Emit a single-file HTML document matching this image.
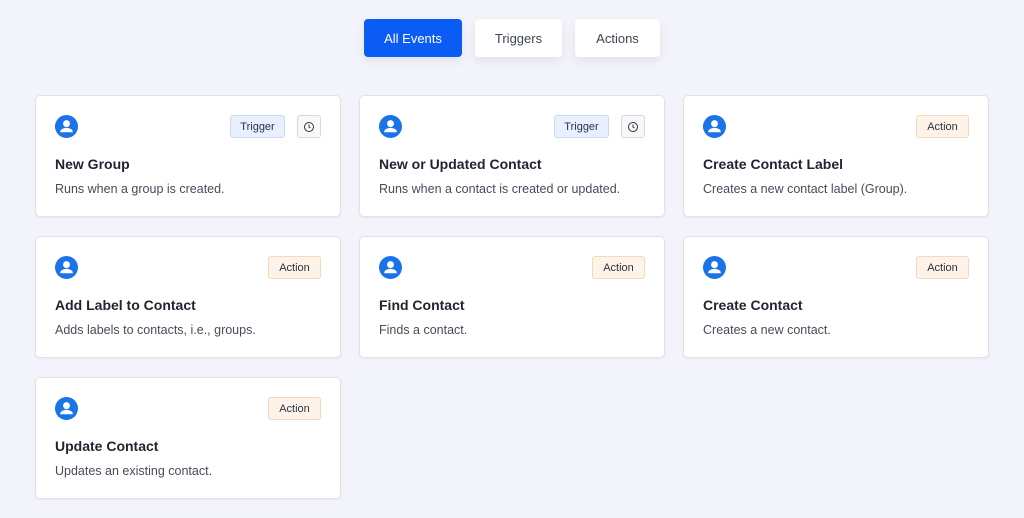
<!DOCTYPE html>
<html><head><style>
*{box-sizing:border-box;margin:0;padding:0}
body{width:1024px;height:518px;background:#f3f4fb;font-family:"Liberation Sans",sans-serif;position:relative;overflow:hidden}
.btn{position:absolute;top:19px;height:38px;border-radius:4px;background:#fff;color:#3d4452;font-size:13px;display:flex;align-items:center;justify-content:center;box-shadow:0 4px 10px rgba(0,0,0,.08)}
.btn.on{background:#0a5cf5;color:#fff}
.card{position:absolute;width:306px;height:122px;background:#fff;border:1px solid #dfe2e8;border-radius:5px;box-shadow:0 1px 3px rgba(0,0,0,.05)}
.ic{position:absolute;left:19px;top:19px;width:23px;height:23px}
.t{position:absolute;left:19px;top:60px;font-size:14px;font-weight:bold;color:#1f2430}
.d{position:absolute;left:19px;top:86px;font-size:12.5px;color:#454c5a}
.b{position:absolute;top:19px;height:23px;border-radius:3px;font-size:11px;display:flex;align-items:center;justify-content:center;color:#2c3340}
.tr{background:#e8f0fd;border:1px solid #c8d8f5;width:55px;right:55px}
.ac{background:#fdf3e8;border:1px solid #f3d9bc;width:53px;right:19px}
.ck{right:19px;width:24px;border:1px solid #d6d9df;background:#f7f8fa}
</style></head><body>
<div class="btn on" style="left:364px;width:98px">All Events</div>
<div class="btn" style="left:475px;width:87px">Triggers</div>
<div class="btn" style="left:575px;width:85px">Actions</div>
<svg width="0" height="0" style="position:absolute"><defs><symbol id="u" viewBox="0 0 24 24"><circle cx="12" cy="12" r="12" fill="#1a73e8"/><circle cx="12" cy="9" r="3.6" fill="#fff"/><path d="M5.5 17.2c0-2.6 4.3-3.8 6.5-3.8s6.5 1.2 6.5 3.8V18h-13z" fill="#fff"/></symbol><symbol id="c" viewBox="0 0 24 24"><circle cx="12" cy="12" r="9" fill="none" stroke="#333" stroke-width="2"/><path d="M12 7V12l3 2" fill="none" stroke="#333" stroke-width="2"/></symbol></defs></svg>

<div class="card" style="left:35px;top:95px"><svg class="ic"><use href="#u"/></svg><div class="b tr">Trigger</div><div class="b ck"><svg width="12" height="12"><use href="#c"/></svg></div><div class="t">New Group</div><div class="d">Runs when a group is created.</div></div>
<div class="card" style="left:359px;top:95px"><svg class="ic"><use href="#u"/></svg><div class="b tr">Trigger</div><div class="b ck"><svg width="12" height="12"><use href="#c"/></svg></div><div class="t">New or Updated Contact</div><div class="d">Runs when a contact is created or updated.</div></div>
<div class="card" style="left:683px;top:95px"><svg class="ic"><use href="#u"/></svg><div class="b ac">Action</div><div class="t">Create Contact Label</div><div class="d">Creates a new contact label (Group).</div></div>
<div class="card" style="left:35px;top:236px"><svg class="ic"><use href="#u"/></svg><div class="b ac">Action</div><div class="t">Add Label to Contact</div><div class="d">Adds labels to contacts, i.e., groups.</div></div>
<div class="card" style="left:359px;top:236px"><svg class="ic"><use href="#u"/></svg><div class="b ac">Action</div><div class="t">Find Contact</div><div class="d">Finds a contact.</div></div>
<div class="card" style="left:683px;top:236px"><svg class="ic"><use href="#u"/></svg><div class="b ac">Action</div><div class="t">Create Contact</div><div class="d">Creates a new contact.</div></div>
<div class="card" style="left:35px;top:377px"><svg class="ic"><use href="#u"/></svg><div class="b ac">Action</div><div class="t">Update Contact</div><div class="d">Updates an existing contact.</div></div>
</body></html>
